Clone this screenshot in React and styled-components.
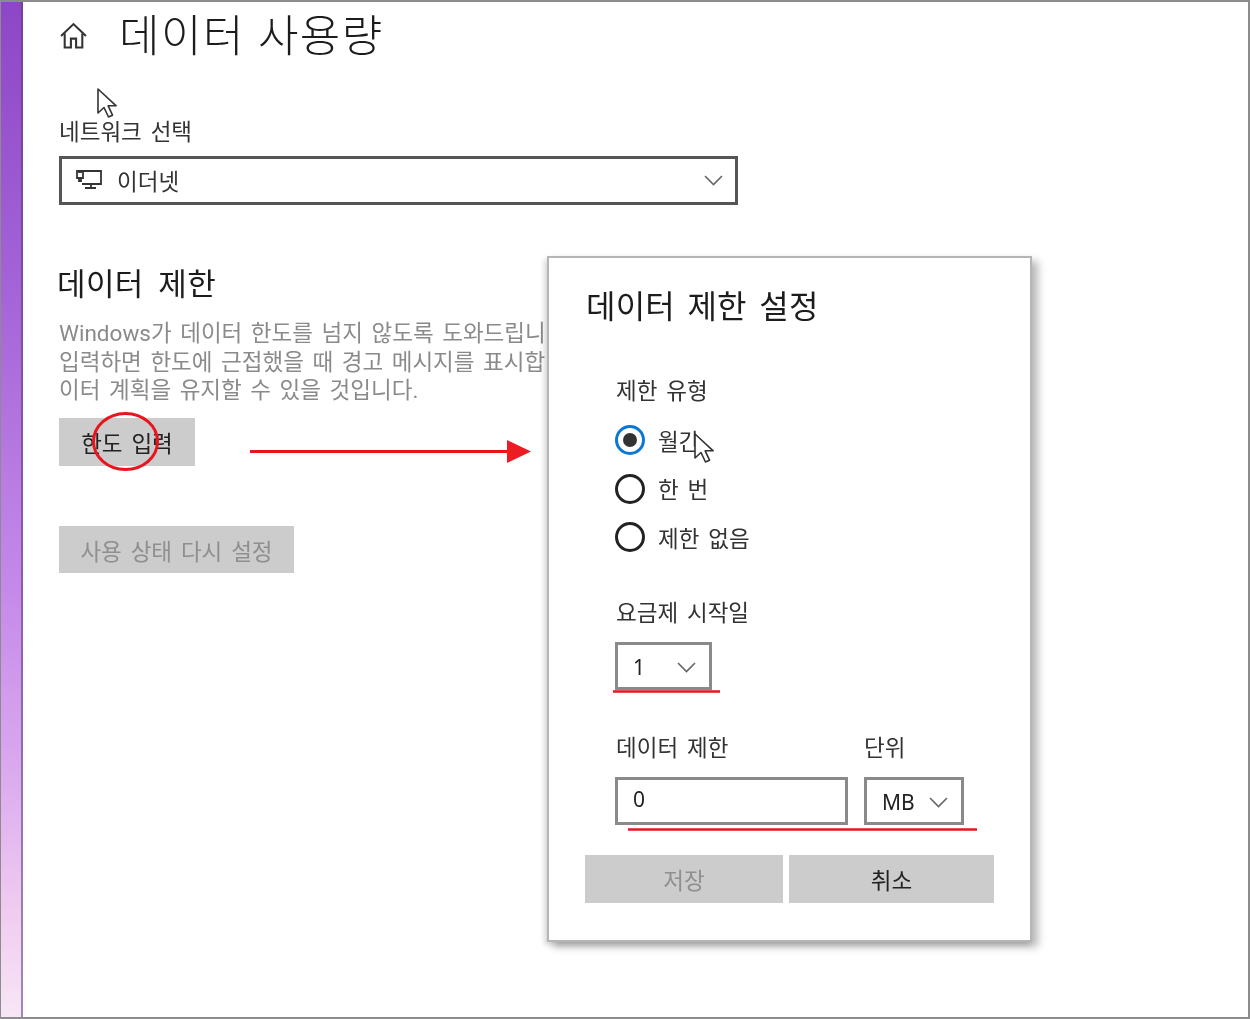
import React from "react";
import styled, { createGlobalStyle } from "styled-components";

const GlobalStyle = createGlobalStyle`
  html, body {
    margin: 0;
    padding: 0;
    background: #fff;
  }
  body {
    font-family: "Noto Sans", "Noto Sans CJK KR", sans-serif;
    color: #1c1c1c;
    word-spacing: 3px;
  }
  * {
    box-sizing: border-box;
  }
`;

const Frame = styled.div`
  position: relative;
  display: flex;
  width: 1250px;
  height: 1019px;
  overflow: hidden;
  background: #fff;
  border: 1px solid #8c8c8c;
  border-top-width: 2px;
  border-right-width: 2px;
  border-bottom-width: 2px;
  filter: blur(0.45px);
`;

const Strip = styled.div`
  flex: 0 0 22px;
  background: linear-gradient(180deg, #8d47c6 0%, #a566d8 30%, #c48ae9 58%, #d9a8ee 75%, #f0cdf0 90%, #f7e6f6 100%);
  border-right: 2px solid rgba(90, 60, 120, 0.55);
`;

const Main = styled.main`
  flex: 1;
  padding: 0 0 0 36px;
`;

const Header = styled.header`
  display: flex;
  align-items: center;
  height: 62px;
  gap: 31px;
  margin-top: 2px;
`;

const Title = styled.h1`
  margin: 0;
  font-size: 44px;
  font-weight: 300;
  letter-spacing: 1.5px;
  word-spacing: 0;
  line-height: 62px;
  white-space: nowrap;
`;

const FieldLabel = styled.div`
  margin-left: ${(p) => p.$indent || 0}px;
  font-size: 22.5px;
  line-height: 30px;
  white-space: nowrap;
  color: #333;
`;

const NetworkLabel = styled(FieldLabel)`
  margin-top: 51px;
  margin-bottom: 9px;
`;

const NetworkSelect = styled.div`
  display: flex;
  align-items: center;
  width: 679px;
  height: 49px;
  padding: 0 12px 1px 14px;
  border: 3px solid #555;
  gap: 15px;
  font-size: 22.5px;
  color: #333;
`;

const Grow = styled.span`
  flex: 1;
`;

const SectionTitle = styled.h2`
  margin: 58px 0 16px -2px;
  font-size: 31px;
  font-weight: 400;
  letter-spacing: 0.4px;
  word-spacing: 6px;
  line-height: 40px;
`;

const Description = styled.div`
  font-family: Roboto, "Noto Sans CJK KR", sans-serif;
  font-size: 22.5px;
  line-height: 28.7px;
  color: #8a8a8a;
  white-space: nowrap;
`;

const GreyButton = styled.div`
  display: flex;
  align-items: center;
  justify-content: center;
  width: ${(p) => p.$width}px;
  height: 48px;
  background: #cccccc;
  font-size: 22.5px;
  color: ${(p) => (p.$disabled ? "#8f8f8f" : "#222")};
`;

const InputButton = styled(GreyButton)`
  margin-top: 12.4px;
  padding-top: 1px;
`;

const ResetButton = styled(GreyButton)`
  margin-top: 60px;
  height: 47px;
  padding-top: 2px;
`;

const Dialog = styled.section`
  position: absolute;
  left: 546px;
  top: 254px;
  width: 485px;
  height: 686px;
  padding: 30px 36px 0 38px;
  background: #fff;
  border: 2px solid #b5b5b5;
  box-shadow: 6px 5px 8px rgba(0, 0, 0, 0.28), -3px 3px 5px rgba(0, 0, 0, 0.14);
`;

const DialogTitle = styled.h3`
  margin: 0 0 52px -1px;
  font-size: 32px;
  font-weight: 400;
  letter-spacing: 0.2px;
  word-spacing: 4px;
  line-height: 36px;
`;

const DialogBody = styled.div`
  padding-left: 28px;
`;

const RadioList = styled.div`
  display: flex;
  flex-direction: column;
  gap: 18.5px;
  margin-top: 19px;
`;

const RadioRow = styled.div`
  display: flex;
  align-items: center;
  gap: 13px;
  height: 30px;
  font-size: 22.5px;
  color: #333;
`;

const RadioMark = styled.span`
  display: flex;
  align-items: center;
  justify-content: center;
  width: 30px;
  height: 30px;
  border-radius: 50%;
  border: 3px solid ${(p) => (p.$checked ? "#0a78d4" : "#222")};
  &::after {
    content: "";
    display: ${(p) => (p.$checked ? "block" : "none")};
    width: 14px;
    height: 14px;
    border-radius: 50%;
    background: #333;
  }
`;

const StartLabel = styled(FieldLabel)`
  margin-top: 46px;
  margin-bottom: 14px;
`;

const SmallSelect = styled.div`
  display: flex;
  align-items: center;
  justify-content: space-between;
  width: ${(p) => p.$width}px;
  height: 48px;
  padding: 2px 13px 0 15px;
  border: 3px solid #8a8a8a;
  font-size: 21px;
  color: #222;
`;

const LimitRow = styled.div`
  display: grid;
  grid-template-columns: 233px 100px;
  column-gap: 16px;
  margin-top: 43px;
`;

const Field = styled.div`
  display: flex;
  flex-direction: column;
  gap: 14px;
`;

const TextInput = styled.div`
  display: flex;
  align-items: center;
  height: 48px;
  padding: 0 15px 4px;
  border: 3px solid #8a8a8a;
  font-size: 21px;
  color: #222;
`;

const DialogActions = styled.div`
  display: grid;
  grid-template-columns: 198px 205px;
  column-gap: 6px;
  margin: 30px 0 0 -2px;
`;

const ActionButton = styled(GreyButton)`
  width: auto;
`;

const Markup = styled.svg`
  position: absolute;
  left: 0;
  top: 0;
  pointer-events: none;
`;

const HomeIcon = () => (
  <svg width="29" height="29" viewBox="0 0 28 28" fill="none" stroke="#333" strokeWidth="2">
    <path d="M2 14.5 14 3l12 11.5" />
    <path d="M5.5 12v13.5h6V17h5v8.5h6V12" />
  </svg>
);

const EthernetIcon = () => (
  <svg width="26" height="24" viewBox="0 0 26 24" fill="none" stroke="#333" strokeWidth="1.8">
    <path d="M6 3h19v13H6" />
    <path d="M9 20h11M15 16v4" />
    <path d="M1 3h6v7H1zM3 10v3h2v-3M3 3v2M5 3v2" />
  </svg>
);

const Chevron = ({ size = 19 }) => (
  <svg width={size} height="11" viewBox="0 0 19 11" fill="none" stroke="#666" strokeWidth="1.6">
    <path d="M1 1l8.5 8.5L18 1" />
  </svg>
);

const Cursor = ({ x, y }) => (
  <g transform={`translate(${x} ${y})`}>
    <path
      d="M1 1v24l6-5.5 4.5 9.5 4-1.8-4.3-9.4h8z"
      fill="#fff"
      stroke="#333"
      strokeWidth="1.6"
      strokeLinejoin="round"
    />
  </g>
);

const App = () => (
  <>
    <GlobalStyle />
    <Frame>
      <Strip />
      <Main>
        <Header>
          <HomeIcon />
          <Title>데이터 사용량</Title>
        </Header>
        <NetworkLabel>네트워크 선택</NetworkLabel>
        <NetworkSelect>
          <EthernetIcon />
          이더넷
          <Grow />
          <Chevron />
        </NetworkSelect>
        <SectionTitle>데이터 제한</SectionTitle>
        <Description>
          <div>Windows가 데이터 한도를 넘지 않도록 도와드립니</div>
          <div>입력하면 한도에 근접했을 때 경고 메시지를 표시합</div>
          <div>이터 계획을 유지할 수 있을 것입니다.</div>
        </Description>
        <InputButton $width={136}>한도 입력</InputButton>
        <ResetButton $width={235} $disabled>
          사용 상태 다시 설정
        </ResetButton>
      </Main>
      <Dialog>
        <DialogTitle>데이터 제한 설정</DialogTitle>
        <DialogBody>
          <FieldLabel $indent={1}>제한 유형</FieldLabel>
          <RadioList>
            <RadioRow>
              <RadioMark $checked />
              월간
            </RadioRow>
            <RadioRow>
              <RadioMark />한 번
            </RadioRow>
            <RadioRow>
              <RadioMark />
              제한 없음
            </RadioRow>
          </RadioList>
          <StartLabel $indent={1}>요금제 시작일</StartLabel>
          <SmallSelect $width={97}>
            1
            <Chevron />
          </SmallSelect>
          <LimitRow>
            <Field>
              <FieldLabel $indent={1}>데이터 제한</FieldLabel>
              <TextInput>0</TextInput>
            </Field>
            <Field>
              <FieldLabel>단위</FieldLabel>
              <SmallSelect $width={100}>
                MB
                <Chevron />
              </SmallSelect>
            </Field>
          </LimitRow>
        </DialogBody>
        <DialogActions>
          <ActionButton $disabled>저장</ActionButton>
          <ActionButton>취소</ActionButton>
        </DialogActions>
      </Dialog>
      <Markup width="1250" height="1019" viewBox="1 2 1250 1019">
        <ellipse cx="125.5" cy="441.5" rx="32" ry="28" fill="none" stroke="#e8141e" strokeWidth="3" />
        <path d="M250 451.5h262" stroke="#e8141e" strokeWidth="3" />
        <path d="M507 440l24 11.5-24 11.5z" fill="#ed1c24" />
        <path d="M613 691.5h107M628 829.5h349" stroke="#e8141e" strokeWidth="2.6" />
        <Cursor x={97} y={88} />
        <Cursor x={694} y={433} />
      </Markup>
    </Frame>
  </>
);

export default App;
